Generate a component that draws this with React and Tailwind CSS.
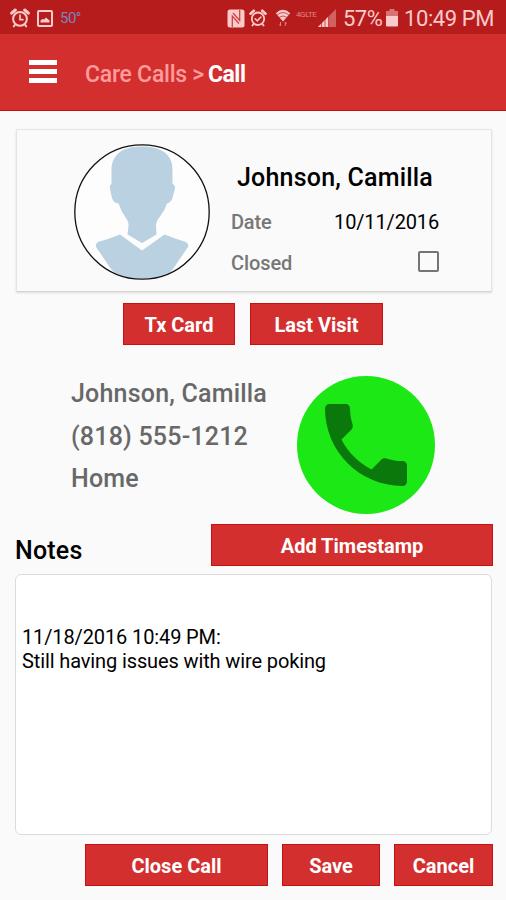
import React from 'react';

const AlarmIcon = ({ className, checked }) => (
  <svg viewBox="0 0 24 24" className={className} fill="none" stroke="currentColor" strokeWidth="2.4" strokeLinecap="round">
    <circle cx="12" cy="13" r="8.3" />
    <path d="M2 6.2 6.4 2.4M22 6.2 17.6 2.4" strokeWidth="3.6" />
    <path d="M6.5 19.5 4.5 22M17.5 19.5l2 2.5" />
    <path d={checked ? 'm8.2 13 2.8 2.8 5-5.2' : 'M12 8.5V14h3.5'} strokeWidth="2" />
  </svg>
);

const PictureIcon = ({ className }) => (
  <svg viewBox="0 0 16 17" className={className}>
    <rect x="1" y="1" width="14" height="15" rx="1" fill="none" stroke="currentColor" strokeWidth="2" />
    <path d="M3.5 12.5v-2l2-1.500 1.500.6L9 7.500l3.500 3v2z" fill="currentColor" />
  </svg>
);

const NfcIcon = ({ className }) => (
  <svg viewBox="0 0 18 19" className={className}>
    <rect x=".5" y=".5" width="17" height="18" rx="2.5" fill="currentColor" />
    <path d="M5.300 18V7L12 14.500" fill="none" stroke="#b71c1c" strokeWidth="1.200" opacity=".8" />
    <path d="M12.700 1v10.500L6 4" fill="none" stroke="#b71c1c" strokeWidth="1.200" opacity=".8" />
  </svg>
);

const WifiIcon = ({ className }) => (
  <svg viewBox="0 0 16 18" className={className}>
    <path d="M8 12.5.8 4.2Q8-2.500 15.200 4.200z" fill="currentColor" />
    <path d="M2.200 5.900Q8 1.300 13.800 5.900M4.300 8.300Q8 5.500 11.700 8.300" fill="none" stroke="#b71c1c" strokeWidth=".7" />
    <path d="M5.500 13v3.700M4.200 15.500l1.300 1.500M10.300 17v-3.700M11.600 14.500 10.300 13" fill="none" stroke="currentColor" strokeWidth="1" opacity=".6" />
  </svg>
);

const SignalIcon = ({ className }) => (
  <svg viewBox="0 0 18 18" className={className}>
    <path d="M0 18 18 0v18z" fill="currentColor" opacity=".4" />
    <path d="M0 18l10.500-10.500V18z" fill="currentColor" />
    <path d="M3.600 13v5M7 10v8M10.600 6v12" stroke="#b71c1c" strokeWidth=".7" />
  </svg>
);

const BatteryIcon = ({ className }) => (
  <svg viewBox="0 0 12 18" className={className} fill="currentColor">
    <path d="M3.500 0h5v2H12v5.500H0V2h3.500z" opacity=".5" />
    <path d="M0 7h12v9.500q0 1-1 1H1q-1 0-1-1z" />
  </svg>
);

const Avatar = () => (
  <svg viewBox="0 0 138 138" className="mt-[2px] h-[138px] w-[138px] shrink-0">
    <defs>
      <clipPath id="avatar-clip">
        <circle cx="69" cy="69" r="66.5" />
      </clipPath>
    </defs>
    <circle cx="69" cy="69" r="67" fill="#fdfdfd" />
    <g clipPath="url(#avatar-clip)" fill="#bad1e1">
      <path d="M69 3.500C54 3.500 38.500 8 38.500 28L38.500 41Q36.500 42 37 46L39 55Q40.500 60 45.500 60.500Q48 68 52 73.500Q56 79 55.500 83L54.500 91.500Q62 96 69 100Q76 96 83.500 91.500L83 83Q83 78 87 73.500Q92 67 94 60.500Q99 59 100 53L102 45.500Q102 42 99.500 40.500L99.500 27C99.500 8 84 3.500 69 3.500Z" />
      <path d="M47 91.500 69 107.500 91.500 91.500Q103 96 113 99Q116 101 115 104L100 126Q90 138 69 138Q49 138 38 126L23 104Q22 101 25 99Q36 96 47 91.500Z" />
    </g>
    <circle cx="69" cy="69" r="67.200" fill="none" stroke="#111" strokeWidth="1.300" />
  </svg>
);

const PhoneIcon = ({ className }) => (
  <svg viewBox="3 3 18 18" className={className} fill="currentColor">
    <path d="M6.620 10.790c1.440 2.830 3.760 5.140 6.590 6.590l2.200-2.200c.27-.27.67-.36 1.020-.24 1.120.37 2.330.57 3.570.57.55 0 1 .45 1 1V20c0 .55-.45 1-1 1-9.390 0-17-7.610-17-17 0-.55.45-1 1-1h3.500c.55 0 1 .45 1 1 0 1.250.2 2.450.57 3.570.11.35.03.74-.25 1.020l-2.200 2.200z" />
  </svg>
);

const ActionButton = ({ className = '', children }) => (
  <button className={`flex h-[42px] items-center justify-center border border-[#c90f0f] bg-[#d32f2f] pt-0.5 text-[20px] font-bold whitespace-nowrap text-white ${className}`}>
    {children}
  </button>
);

const StatusBar = () => (
  <div className="flex h-[34px] items-center bg-[#b71c1c] pt-0.5 text-[#fbcaca]">
    <AlarmIcon className="ml-2.5 h-5 w-5" />
    <PictureIcon className="ml-[7px] h-[17px] w-4" />
    <span className="ml-[7px] w-5 text-[15px] tracking-[-0.5px] text-[#7d84bd]">50°</span>
    <NfcIcon className="ml-[147px] h-[19px] w-[18px]" />
    <AlarmIcon checked className="ml-[4px] h-[18px] w-[18px]" />
    <WifiIcon className="ml-[8px] h-[18px] w-4" />
    <span className="mb-1.5 ml-[5px] w-[20px] text-[8px] tracking-[-0.4px] opacity-60">4GLTE</span>
    <SignalIcon className="ml-[2px] h-[18px] w-[18px]" />
    <span className="ml-[7px] w-[39px] text-[22px] tracking-[-0.5px] whitespace-nowrap">57%</span>
    <BatteryIcon className="ml-[4px] h-[18px] w-3" />
    <span className="ml-[6px] text-[22px] tracking-[-0.4px] whitespace-nowrap">10:49 PM</span>
  </div>
);

const App = () => (
  <div className="flex h-[900px] w-[506px] flex-col overflow-hidden bg-[#fafafa] font-['Roboto',sans-serif] text-black">
    <StatusBar />

    <header className="flex h-[77px] items-center border-b border-[#c60c0c] bg-[#d32f2f] pl-[29px]">
      <button className="flex w-7 -translate-y-px flex-col gap-[4px]" aria-label="Menu">
        <span className="h-[5px] bg-white" />
        <span className="h-[5px] bg-white" />
        <span className="h-[5px] bg-white" />
      </button>
      <div className="mt-[7px] ml-7 flex text-[23px] font-medium whitespace-nowrap">
        <span className="w-[123px] tracking-[-0.25px] text-[#ff9b9b]">Care Calls &gt;</span>
        <span className="font-bold tracking-[-0.5px] text-white">Call</span>
      </div>
    </header>

    <main className="flex flex-1 flex-col pr-[13px] pl-[15px]">
      {/* Patient card */}
      <section className="mt-[18px] mr-px ml-px flex h-[163px] items-center border border-[#e5e5e5] border-b-[#d5d5d5] pl-[56px] shadow-[0_1px_2px_rgba(0,0,0,0.12)]">
        <Avatar />
        <div className="mt-[18px] ml-[20px] w-[208px]">
          <h1 className="pl-[6px] text-[25px] leading-8 font-medium tracking-[0.2px] whitespace-nowrap">Johnson, Camilla</h1>
          <div className="mt-[14px] flex items-center justify-between text-[20px] leading-7">
            <span className="font-medium tracking-[-0.2px] text-[#777]">Date</span>
            <span className="tracking-[-0.15px]">10/11/2016</span>
          </div>
          <div className="mt-[13px] flex items-center justify-between text-[20px] leading-7">
            <span className="font-medium tracking-[-0.1px] text-[#777]">Closed</span>
            <span className="-mt-1 h-[21px] w-[21px] rounded-[2px] border-2 border-[#747474]" />
          </div>
        </div>
      </section>

      <div className="mt-[11px] flex pl-[108px]">
        <ActionButton className="w-[112px]">Tx Card</ActionButton>
        <ActionButton className="ml-[15px] w-[133px]">Last Visit</ActionButton>
      </div>

      {/* Contact */}
      <section className="mt-[31px] flex h-[138px] pl-[56px]">
        <div className="-mt-[3px] w-[226px] text-[25px] leading-[42.5px] font-medium tracking-[0.2px] whitespace-nowrap text-[#686868]">
          <p>Johnson, Camilla</p>
          <p>(818) 555-1212</p>
          <p>Home</p>
        </div>
        <button className="flex h-[138px] w-[138px] items-center justify-center rounded-full bg-[#1be815] text-[#0b780b]" aria-label="Call">
          <PhoneIcon className="h-[82px] w-[82px]" />
        </button>
      </section>

      {/* Notes */}
      <div className="mt-[10px] flex h-[42px] items-center justify-between">
        <h2 className="mt-[12px] text-[25px] leading-8 font-medium tracking-[0.2px]">Notes</h2>
        <ActionButton className="w-[282px]">Add Timestamp</ActionButton>
      </div>
      <div className="mt-[8px] mr-px h-[261px] rounded-[6px] border border-[#dcdcdc] bg-white pt-[51px] pl-[6px] text-[20px] leading-[23.5px] tracking-[-0.12px] whitespace-nowrap">
        <p>11/18/2016 10:49 PM:</p>
        <p>Still having issues with wire poking</p>
      </div>

      <footer className="mt-[9px] flex justify-end gap-[14px]">
        <ActionButton className="w-[183px]">Close Call</ActionButton>
        <ActionButton className="w-[98px]">Save</ActionButton>
        <ActionButton className="w-[99px]">Cancel</ActionButton>
      </footer>
    </main>
  </div>
);

export default App;
